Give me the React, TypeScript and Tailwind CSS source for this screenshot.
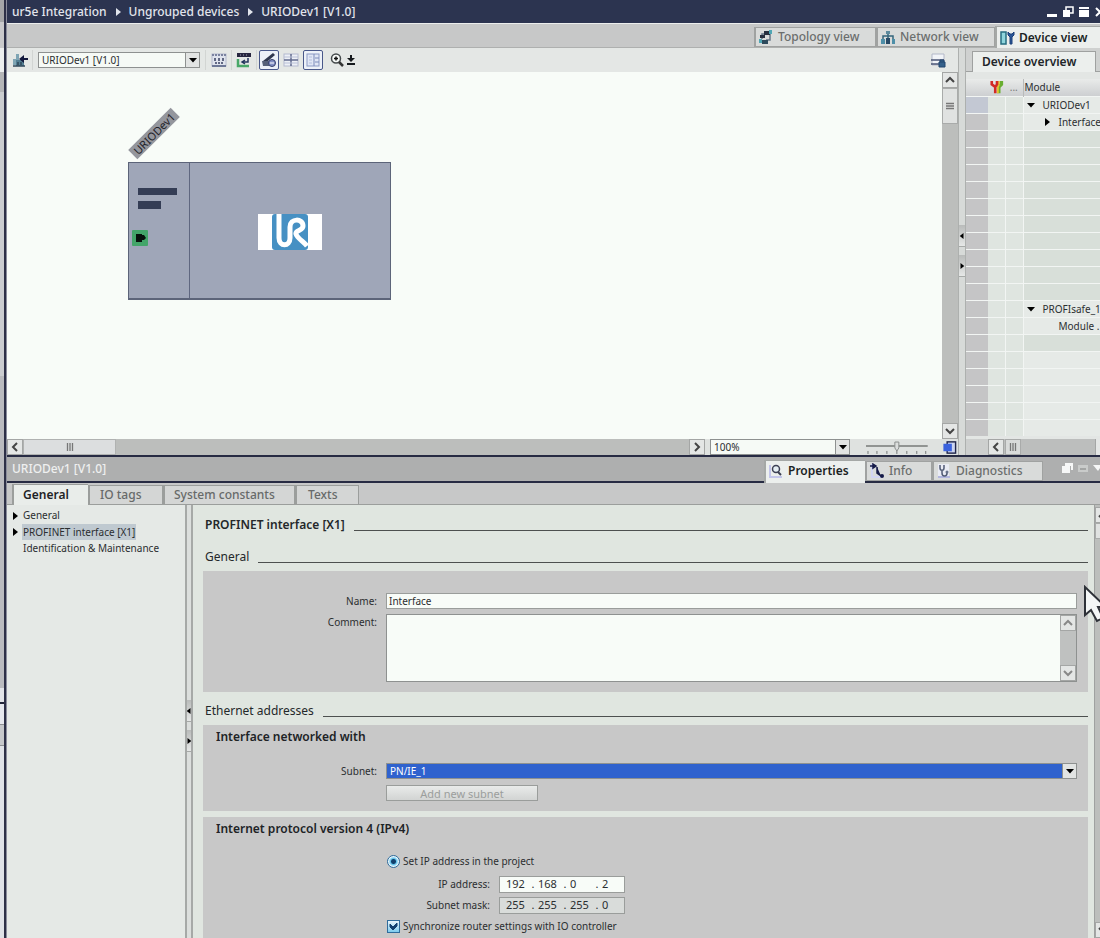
import type { ReactNode } from 'react';

type GlyphProps = { className?: string };

const Tri = ({ dir, className = '' }: { dir: 'r' | 'd' | 'l'; className?: string }) => (
  <svg viewBox="0 0 8 8" className={`h-2 w-2 shrink-0 ${className}`} aria-hidden="true">
    <path d={dir === 'r' ? 'M2 0l5 4-5 4z' : dir === 'l' ? 'M6 0L1 4l5 4z' : 'M0 2h8L4 6.500z'} fill="currentColor" />
  </svg>
);

const Chevron = ({ dir }: { dir: 'u' | 'd' | 'l' | 'r' }) => {
  const d = { u: 'M1 7l4-4 4 4', d: 'M1 3l4 4 4-4', l: 'M7 1L3 5l4 4', r: 'M3 1l4 4-4 4' }[dir];
  return (
    <svg viewBox="0 0 10 10" className="h-[10px] w-[10px]" aria-hidden="true">
      <path d={d} fill="none" stroke="currentColor" strokeWidth="2" />
    </svg>
  );
};

const ScrollButton = ({ dir, label, className = 'text-[#444]' }: { dir: 'u' | 'd' | 'l' | 'r'; label: string; className?: string }) => (
  <button
    type="button"
    aria-label={label}
    className={`flex h-4 w-4 shrink-0 items-center justify-center overflow-hidden border border-[#a4a6a5] bg-[#e4e6e5] ${className}`}
  >
    <Chevron dir={dir} />
  </button>
);

const Grip = ({ vertical = false }: { vertical?: boolean }) => (
  <svg viewBox="0 0 8 8" className="h-2 w-2" aria-hidden="true">
    <path d={vertical ? 'M0 1.500h8M0 4h8M0 6.500h8' : 'M1.500 0v8M4 0v8M6.500 0v8'} stroke="#777" strokeWidth="1.300" />
  </svg>
);

const TopologyIcon = ({ className = '' }: GlyphProps) => (
  <svg viewBox="0 0 16 16" className={`h-4 w-4 shrink-0 ${className}`} aria-hidden="true">
    <path d="M4 10V5h4M12 5v6H8" fill="none" stroke="#678" strokeWidth="1.500" />
    <rect x="6" y="2" width="6" height="4" fill="#27303f" />
    <rect x="11" y="1" width="3" height="4" fill="#4fa6b4" />
    <rect x="2" y="6" width="5" height="3" fill="#27303f" />
    <rect x="4" y="11" width="6" height="4" fill="#2d4a5c" />
    <rect x="1" y="10" width="3" height="4" fill="#4fa6b4" />
  </svg>
);

const NetworkIcon = ({ className = '' }: GlyphProps) => (
  <svg viewBox="0 0 16 16" className={`h-4 w-4 shrink-0 ${className}`} aria-hidden="true">
    <path d="M8 3v12M3 11V7h10v4" fill="none" stroke="#35667c" strokeWidth="1.500" />
    <rect x="6" y="2" width="4" height="3" fill="#5d8a9d" />
    <rect x="1" y="10" width="4" height="5" fill="#4e8fa8" />
    <rect x="6" y="9" width="4" height="6" fill="#284a66" />
    <rect x="12" y="10" width="3" height="5" fill="#4e8fa8" />
  </svg>
);

const DeviceIcon = ({ className = '' }: GlyphProps) => (
  <svg viewBox="0 0 16 16" className={`h-4 w-4 shrink-0 ${className}`} aria-hidden="true">
    <rect x="2" y="2" width="5" height="12" fill="#8fd5dc" stroke="#256c80" strokeWidth="1.500" />
    <path d="M9 2v3l2 2v7h2V7l2-2V2l-2 2h-2z" fill="#2a5597" stroke="#1d4079" />
  </svg>
);

const GoDeviceIcon = () => (
  <svg viewBox="0 0 16 16" className="h-4 w-4" aria-hidden="true">
    <path d="M4 2h3v6H4zM1 7h3v6H1z" fill="#7fa5b4" />
    <path d="M4 8h8v6H4z" fill="#537f93" />
    <path d="M1 14h12M6 10v3M9 10v3" stroke="#31485a" strokeWidth="1.500" />
    <path d="M16 7H10" stroke="#12183c" strokeWidth="2" />
    <path d="M12 3L7 7l5 4z" fill="#12183c" />
  </svg>
);

const CatalogIcon = () => (
  <svg viewBox="0 0 16 16" className="h-4 w-4" aria-hidden="true">
    <rect x="1" y="2" width="14" height="12" fill="#dfe3ed" stroke="#b3bacd" />
    <path d="M1 3h14" stroke="#7b83a0" strokeWidth="2" strokeDasharray="2 1" />
    <path d="M4 6v3M8 6v3M12 6v3M4 11h2M7 11h2M10 11h2" stroke="#384062" strokeWidth="1.500" />
    <path d="M1 14h14" stroke="#6d7797" strokeWidth="2" />
  </svg>
);

const RackIcon = () => (
  <svg viewBox="0 0 16 16" className="h-4 w-4" aria-hidden="true">
    <path d="M1 1h14v4H1z" fill="#27263f" />
    <path d="M4 3h1M7 3h1M10 3h1" stroke="#aab" />
    <path d="M12 6v4H7M9 8l-3 2 3 2" fill="none" stroke="#24365e" strokeWidth="1.500" />
    <path d="M2 7v7h11" fill="none" stroke="#49a869" strokeWidth="2.500" />
  </svg>
);

const PenIcon = () => (
  <svg viewBox="0 0 16 16" className="h-4 w-4" aria-hidden="true">
    <path d="M2 9L12 1l2 2-7 6z" fill="#30384f" />
    <path d="M1 9h7l2 5H2z" fill="#566078" />
    <circle cx="11" cy="11" r="3.500" fill="#8390c4" stroke="#37406b" />
    <path d="M9 11h4" stroke="#fff" />
  </svg>
);

const GridIcon = () => (
  <svg viewBox="0 0 16 16" className="h-4 w-4" aria-hidden="true">
    <rect x="1" y="2" width="14" height="12" fill="#edf0f6" stroke="#b3bad0" />
    <path d="M8 2v12M1 8h14" stroke="#626b8f" strokeWidth="1.500" />
    <path d="M1 5h14M1 11h14" stroke="#b9c0d6" />
  </svg>
);

const PanelIcon = () => (
  <svg viewBox="0 0 16 16" className="h-4 w-4" aria-hidden="true">
    <rect x="2" y="2" width="12" height="12" fill="#e0e6f5" stroke="#8c9ac4" />
    <path d="M9 2v12M10 6h4M10 10h4" stroke="#7c8cba" />
    <path d="M4 5h3M4 8h3M4 11h3" stroke="#b4bfdd" />
  </svg>
);

const ZoomIcon = () => (
  <svg viewBox="0 0 16 16" className="h-4 w-4" aria-hidden="true">
    <circle cx="7" cy="6.500" r="4.500" fill="#f5f8f6" stroke="#454a4c" strokeWidth="1.500" />
    <path d="M5 6.500h4M7 4.500v4" stroke="#111" strokeWidth="1.500" />
    <path d="M10 10l4 4" stroke="#333" strokeWidth="2.500" />
  </svg>
);

const UrLogo = () => (
  <svg viewBox="0 0 36 36" className="h-9 w-9" aria-hidden="true">
    <rect width="36" height="36" rx="3" fill="#4690c3" />
    <path
      d="M7 0v24c0 9 11 9 11 0V13c0-9 13-9 13-1 0 5-8 4-7 8 1 4 8 8 11 12"
      fill="none"
      stroke="#fff"
      strokeWidth="5"
      strokeLinejoin="round"
    />
  </svg>
);

const MagnifyIcon = () => (
  <svg viewBox="0 0 16 16" className="h-4 w-4 shrink-0" aria-hidden="true">
    <path d="M2 2v12h12" fill="none" stroke="#c3c5ea" strokeWidth="2" />
    <circle cx="8" cy="6" r="3.500" fill="#e4edf2" stroke="#3d4054" strokeWidth="1.500" />
    <path d="M10 9l3 3" stroke="#3d4054" strokeWidth="2" />
  </svg>
);

const InfoIcon = () => (
  <svg viewBox="0 0 16 16" className="h-4 w-4 shrink-0" aria-hidden="true">
    <path d="M3 1v13h10" fill="none" stroke="#d2d5f3" strokeWidth="2" />
    <path d="M1 3h4M4 1l3 2-3 2zM8 4v6l4 3" fill="#151a48" stroke="#151a48" strokeWidth="1.500" />
    <circle cx="13" cy="13" r="2" fill="#151a48" />
  </svg>
);

const DiagIcon = () => (
  <svg viewBox="0 0 16 16" className="h-4 w-4 shrink-0" aria-hidden="true">
    <rect x="2" y="1" width="11" height="12" fill="#e9ebf4" />
    <path d="M2 14h12" stroke="#b2b6df" strokeWidth="2" />
    <path d="M4 2v3c0 3 4 3 4 0V2M6 7v3c0 4 5 4 5 0" fill="none" stroke="#515b75" strokeWidth="1.500" />
    <circle cx="11" cy="9" r="1.500" fill="#68728b" />
  </svg>
);

const ToolsIcon = () => (
  <svg viewBox="0 0 16 16" className="mx-auto h-[14px] w-[14px]" aria-hidden="true">
    <path d="M13 1v4l-3 3v7" fill="none" stroke="#69ae31" strokeWidth="4" />
    <path d="M10 1v5l-1 2v7" fill="none" stroke="#e6c531" strokeWidth="2" />
    <path d="M2 1v4l4 3v7M8 1v4L6 8" fill="none" stroke="#d22b25" strokeWidth="3" />
  </svg>
);

const WindowButtons = () => (
  <div className="-mr-[6px] flex shrink-0 items-center gap-1 text-white">
    <button type="button" aria-label="Minimize">
      <svg viewBox="0 0 12 12" className="h-3 w-3"><path d="M1 8h10v3H1z" fill="currentColor" /></svg>
    </button>
    <button type="button" aria-label="Restore">
      <svg viewBox="0 0 12 12" className="h-3 w-3">
        <path d="M4 4V1h7v6H8" fill="none" stroke="currentColor" strokeWidth="1.500" />
        <path d="M1 4h7v7H1z" fill="currentColor" />
      </svg>
    </button>
    <button type="button" aria-label="Maximize">
      <svg viewBox="0 0 12 12" className="h-3 w-3">
        <path d="M1 1h10v2H1zM1 4h10v7H1z" fill="currentColor" />
      </svg>
    </button>
    <button type="button" aria-label="Close">
      <svg viewBox="0 0 12 12" className="h-3 w-3"><path d="M2 2l8 8M10 2l-8 8" stroke="currentColor" strokeWidth="2" /></svg>
    </button>
  </div>
);

const ViewTab = ({ icon, children, active = false, className = 'h-5' }: { icon: ReactNode; children: ReactNode; active?: boolean; className?: string }) => (
  <button
    type="button"
    role="tab"
    aria-selected={active}
    className={`flex shrink-0 items-center gap-1 border-l-2 border-t px-[2px] text-xs whitespace-nowrap ${
      active ? 'border-[#a5a8a6] bg-[#ecefed] font-semibold text-[#1b1f24]' : 'border-r border-b border-[#a0a2a1] bg-[#d9dbda] font-medium text-[#6b6e6d]'
    } ${className}`}
  >
    {icon}
    {children}
  </button>
);

const ToolButton = ({ label, pressed = false, children }: { label: string; pressed?: boolean; children: ReactNode }) => (
  <button
    type="button"
    aria-label={label}
    className={`flex h-5 w-5 shrink-0 items-center justify-center rounded-xs border ${pressed ? 'border-[#49588a] bg-[#edf1f8]' : 'border-transparent'}`}
  >
    {children}
  </button>
);

const Divider = () => <span className="mx-[2px] h-5 w-px bg-[#d2d5d3]" />;

const Combo = ({ id, label, options, className, selectClass }: { id: string; label?: string; options: string[]; className: string; selectClass: string }) => (
  <div className={`relative flex h-4 border border-[#8e9190] ${className}`}>
    <select id={id} aria-label={label} className={`h-full w-full appearance-none px-[3px] leading-[14px] outline-none ${selectClass}`}>
      {options.map((o) => (
        <option key={o}>{o}</option>
      ))}
    </select>
    <span className="pointer-events-none absolute inset-y-0 right-0 flex w-[14px] items-center justify-center border-l border-[#8e9190] bg-[#e2e4e3] text-black">
      <Tri dir="d" />
    </span>
  </div>
);

const SplitterHandle = ({ className = '' }: { className?: string }) => (
  <div className={`flex flex-col gap-2 ${className}`}>
    {(['l', 'r'] as const).map((dir) => (
      <button
        key={dir}
        type="button"
        aria-label={dir === 'l' ? 'Collapse left' : 'Collapse right'}
        className="flex h-[22px] w-full items-center justify-center overflow-hidden border-b border-[#a7aaa8] bg-linear-to-b from-[#b9bbba] to-[#e6e8e7] text-black"
      >
        <Tri dir={dir} className="h-[6px] w-[6px]" />
      </button>
    ))}
  </div>
);

const moduleRows = Array.from({ length: 20 }, (_, i) => i);
const moduleNames: Record<number, { text: string; dir?: 'r' | 'd'; pad: string }> = {
  0: { text: 'URIODev1', dir: 'd', pad: 'pl-[3px] gap-2' },
  1: { text: 'Interface', dir: 'r', pad: 'pl-[19px] gap-2' },
  12: { text: 'PROFIsafe_1', dir: 'd', pad: 'pl-[3px] gap-2' },
  13: { text: 'Module .', pad: 'pl-[35px]' },
};

const DeviceOverview = () => (
  <aside className="flex w-[134px] shrink-0 flex-col overflow-hidden bg-[#e3e6e4]">
    <div className="flex h-6 shrink-0 items-end border-b border-[#9fa1a0] bg-[#cfd1d0] pl-[6px]">
      <button type="button" className="-mb-px h-[21px] w-[124px] border border-b-0 border-[#9fa1a0] bg-[#ecefed] px-[9px] text-left text-xs font-semibold whitespace-nowrap text-[#22262a]">
        Device overview
      </button>
    </div>
    <table className="mt-[7px] w-[240px] table-fixed border-collapse text-[10px] leading-3 text-[#2c2f31]">
      <colgroup>
        <col className="w-[22px]" />
        <col className="w-[17px]" />
        <col className="w-[18px]" />
        <col />
      </colgroup>
      <thead>
        <tr className="h-[17px] bg-linear-to-b from-[#e9ebea] to-[#cdcfd1]">
          <th className="p-0" />
          <th className="p-0"><ToolsIcon /></th>
          <th className="p-0 font-normal text-[#777]">...</th>
          <th className="border-l border-[#b9bbba] p-0 pl-px text-left font-normal">Module</th>
        </tr>
      </thead>
      <tbody>
        {moduleRows.map((i) => {
          const item = moduleNames[i];
          const light = item || i > 14;
          return (
            <tr key={i} className="h-[17px] border-t border-[#f2f5f3]">
              <td className={`p-0 ${i === 0 ? 'bg-[#c3c8d3]' : 'bg-[#c5c5c6]'}`} />
              <td className="border-r border-[#f2f5f3] bg-[#dfe5e0] p-0" />
              <td className="border-r border-[#f2f5f3] bg-[#dfe5e0] p-0" />
              <td className={`p-0 ${light ? 'bg-[#e6eae7]' : 'bg-[#d8dfd9]'}`}>
                {item && (
                  <div className={`flex items-center ${item.pad}`}>
                    {item.dir && <Tri dir={item.dir} className="text-black" />}
                    {item.text}
                  </div>
                )}
              </td>
            </tr>
          );
        })}
      </tbody>
    </table>
    <div className="mt-auto flex h-4 shrink-0 bg-[#bcbebd]">
      <div className="w-[22px] bg-[#cdcfce]" />
      <ScrollButton dir="l" label="Scroll left" />
      <div className="ml-px flex w-4 items-center justify-center border border-[#a9abaa] bg-[#d9dbda]"><Grip /></div>
      <div className="flex-1" />
      <div className="w-[5px] border-l border-[#a4a6a5] bg-[#e4e6e5]" />
    </div>
  </aside>
);

const DeviceCanvas = () => (
  <div className="relative min-w-0 flex-1 overflow-hidden bg-[#f8fcf8]">
    <div className="absolute top-[55px] left-[117px] flex h-[13px] w-[60px] -rotate-45 items-center justify-center bg-[#94969d] text-[11px] leading-none text-[#1f2229]">
      URIODev1
    </div>
    <div className="absolute top-[90px] left-[121px] flex h-[138px] w-[263px] border border-b-2 border-[#5c6479] bg-[#9fa6b8]">
      <div className="flex w-[61px] flex-col items-start border-r border-[#5f6780]">
        <div className="mt-[25px] ml-[9px] h-[7px] w-[39px] bg-[#343d55]" />
        <div className="mt-[6px] ml-[9px] h-2 w-[23px] bg-[#343d55]" />
        <svg viewBox="0 0 16 16" className="mt-[21px] ml-[3px] h-4 w-4" aria-hidden="true">
          <rect width="16" height="16" rx="1" fill="#43a569" />
          <path d="M4 4h6v1h2l2 3-2 2h-2v2H4z" fill="#06110b" />
        </svg>
      </div>
      <div className="flex flex-1 items-center justify-center pt-[2px]">
        <div className="flex w-16 justify-center bg-white">
          <UrLogo />
        </div>
      </div>
    </div>
  </div>
);

const Heading = ({ children, bold = false, className = '' }: { children: ReactNode; bold?: boolean; className?: string }) => (
  <div className={`flex h-5 items-center gap-[9px] pl-[2px] text-[#24282a] ${className}`}>
    <h2 className={`text-xs whitespace-nowrap ${bold ? 'font-semibold' : ''}`}>{children}</h2>
    <div className="mt-[10px] h-px flex-1 bg-[#4d504f]" />
  </div>
);

const Row = ({ label, htmlFor, children, className = '' }: { label?: string; htmlFor?: string; children: ReactNode; className?: string }) => (
  <div className={`flex items-start gap-[9px] pr-[11px] ${className}`}>
    <label htmlFor={htmlFor} className="w-[174px] shrink-0 text-right leading-4">{label}</label>
    {children}
  </div>
);

const Octets = ({ name, values, disabled = false, id }: { name: string; values: number[]; disabled?: boolean; id: string }) => (
  <div role="group" aria-label={name} className={`flex h-[17px] w-[126px] items-center border border-[#9a9d9b] pl-[6px] text-[11px] ${disabled ? 'bg-[#d9dcda]' : 'bg-[#f8fcf8]'}`}>
    {values.map((v, i) => (
      <div key={i} className="flex items-center">
        {i > 0 && <span className="w-[10px] text-center">.</span>}
        <input id={i === 0 ? id : undefined} aria-label={`${name} octet ${i + 1}`} defaultValue={v} readOnly={disabled} className="h-[14px] w-[22px] bg-transparent p-0 outline-none" />
      </div>
    ))}
  </div>
);

const PropertyTab = ({ children, active = false, className = '' }: { children: ReactNode; active?: boolean; className?: string }) => (
  <button
    type="button"
    role="tab"
    aria-selected={active}
    className={`border-t border-l-2 border-[#9b9e9c] text-left text-xs whitespace-nowrap ${
      active ? '-mb-px h-[21px] bg-[#e9edea] pb-px font-semibold text-[#1f2326]' : 'h-[19px] border-r bg-[#d4d6d5] font-medium text-[#676a69]'
    } ${className}`}
  >
    {children}
  </button>
);

export default function App() {
  return (
    <div className="relative flex h-screen overflow-hidden bg-[#e5e9e6] font-['Noto_Sans','Open_Sans',sans-serif] text-[10px] text-[#2b2e30]">
      <div className="flex w-1 shrink-0 flex-col">
        <div className="h-[22px] bg-[#a5a6a8]" />
        <div className="h-[26px] bg-[#c9c9cb]" />
        <div className="h-6 bg-[#eceeee]" />
        <div className="h-[20px] bg-[#b5b6b8]" />
        <div className="h-[284px] bg-[#cbcdd0]" />
        <div className="h-[312px] bg-[#babbbf]" />
        <div className="h-[14px] bg-[#e2e4e8]" />
        <div className="h-[2px] bg-[#22263a]" />
        <div className="h-5 bg-[#e6e8ee]" />
        <div className="h-[22px] border-y border-[#8e9094] bg-[#c6c8cb]" />
        <div className="flex-1 bg-[#dfe2e7]" />
      </div>
      <div className="w-[3px] shrink-0 border-r border-r-[#8a8c9c] bg-[#2d3047]" />

      <div className="flex min-w-0 flex-1 flex-col">
        <header className="flex h-[23px] shrink-0 items-center justify-between bg-[#2c3450] pl-[5px] text-white">
          <nav aria-label="Path" className="flex items-center gap-[7px] text-xs font-medium whitespace-nowrap text-[#e2e5ec]">
            <a href="#project">ur5e Integration</a>
            <Tri dir="r" />
            <a href="#devices">Ungrouped devices</a>
            <Tri dir="r" />
            <a href="#device">URIODev1 [V1.0]</a>
          </nav>
          <WindowButtons />
        </header>

        <div role="tablist" className="flex h-[25px] shrink-0 items-end justify-end border-t border-b border-t-[#eceeed] border-b-[#aeb0af] bg-[#c7c8c8]">
          <ViewTab icon={<TopologyIcon />} className="h-5 w-[122px]">Topology view</ViewTab>
          <ViewTab icon={<NetworkIcon />} className="h-5 w-[119px]">Network view</ViewTab>
          <ViewTab icon={<DeviceIcon />} active className="-mb-px h-[22px] w-[105px]">Device view</ViewTab>
        </div>

        <section className="flex h-[407px] shrink-0">
          <div className="flex min-w-0 flex-1 flex-col">
            <div className="flex h-6 shrink-0 items-center bg-[#e4e7e5] pr-3 pl-[3px]">
              <ToolButton label="Go to device"><GoDeviceIcon /></ToolButton>
              <Divider />
              <Combo id="device" label="Device" options={['URIODev1 [V1.0]']} className="ml-[3px] w-[162px]" selectClass="bg-[#f6faf6]" />
              <div className="ml-[3px] flex items-center">
                <Divider />
                <span className="w-px" />
                <ToolButton label="Catalog data"><CatalogIcon /></ToolButton>
                <Divider />
                <ToolButton label="Slot labels"><RackIcon /></ToolButton>
                <Divider />
              </div>
              <div className="flex items-center gap-[2px]">
                <ToolButton label="Edit" pressed><PenIcon /></ToolButton>
                <ToolButton label="Page breaks"><GridIcon /></ToolButton>
                <ToolButton label="Overview pane" pressed><PanelIcon /></ToolButton>
              </div>
              <button type="button" aria-label="Zoom in" className="ml-[6px]"><ZoomIcon /></button>
              <svg viewBox="0 0 8 12" className="ml-[2px] h-3 w-2" aria-hidden="true">
                <path d="M3 1h2v3h3L4 8 0 4h3zM0 9h8v2H0z" fill="#161a1d" />
              </svg>
              <button type="button" aria-label="Save layout" className="ml-auto">
                <svg viewBox="0 0 16 16" className="h-4 w-4" aria-hidden="true">
                  <path d="M2 2h12v11H2z" fill="#f1f4f8" stroke="#b3b8c8" />
                  <path d="M1 8h13M1 12h8" stroke="#4b5575" strokeWidth="1.500" />
                  <path d="M9 10h6v5H9zM10 10V8h4v2" fill="#34608a" stroke="#23476e" />
                </svg>
              </button>
            </div>
            <div className="flex min-h-0 flex-1">
              <DeviceCanvas />
              <div className="flex w-4 flex-col bg-[#bcbebc]">
                <ScrollButton dir="u" label="Scroll up" />
                <div className="flex h-9 items-center justify-center border border-[#a9abaa] bg-[#e0e2e1]"><Grip vertical /></div>
                <div className="flex-1" />
                <ScrollButton dir="d" label="Scroll down" />
              </div>
            </div>
            <div className="flex h-4 shrink-0 items-stretch bg-[#bcbebc]">
              <ScrollButton dir="l" label="Scroll left" />
              <div className="flex w-[93px] items-center justify-center border border-[#b0b2b1] bg-[#dcdedf]"><Grip /></div>
              <div className="flex-1" />
              <ScrollButton dir="r" label="Scroll right" />
              <div className="flex w-[253px] items-center bg-[#dfe2e0] pl-[5px]">
                <Combo id="zoom" label="Zoom" options={['100%']} className="w-[141px]" selectClass="bg-[#f6faf6]" />
                <svg viewBox="0 0 62 14" className="ml-4 h-[14px] w-[62px]" aria-hidden="true">
                  <path d="M0 6h62" stroke="#777a79" strokeWidth="1.500" />
                  <path d="M2 11v3M11 11v3M21 11v3M31 10v4M41 11v3M51 11v3M60 11v3" stroke="#777a79" />
                  <path d="M29 2h4v6l-2 3-2-3z" fill="#dcdedd" stroke="#8b8e8d" />
                </svg>
                <svg viewBox="0 0 16 16" className="ml-[14px] h-[15px] w-4" aria-hidden="true">
                  <rect x="5" y="2" width="9" height="12" fill="#cdd5f0" stroke="#20264b" strokeWidth="1.500" />
                  <path d="M1 4h9v8H1z" fill="#3a62dd" />
                </svg>
              </div>
            </div>
          </div>
          <div className="flex w-2 shrink-0 flex-col border-x border-[#adb0ae] bg-[#d7dad8] pt-[177px]">
            <SplitterHandle />
          </div>
          <DeviceOverview />
        </section>

        <div className="flex h-7 shrink-0 items-end justify-between border-t-2 border-b-2 border-[#272b43] bg-[#aeafaf] pl-[5px]">
          <h1 className="self-center text-xs font-medium text-[#eff0f0]">URIODev1 [V1.0]</h1>
          <div className="flex">
            <div role="tablist" className="flex items-end">
              <ViewTab icon={<MagnifyIcon />} active className="-mb-[2px] h-[23px] w-[101px] pb-[2px]">Properties</ViewTab>
              <ViewTab icon={<InfoIcon />} className="h-5 w-[67px]">Info</ViewTab>
              <ViewTab icon={<DiagIcon />} className="h-5 w-[111px]">Diagnostics</ViewTab>
            </div>
            <svg viewBox="0 0 40 14" className="mt-[2px] -mr-[2px] ml-[19px] h-[14px] w-10" aria-hidden="true">
              <path d="M3 1h8v7H9V4H3zM0 4h8v7H0z" fill="#f6f7f7" />
              <path d="M16 3h10v7H16z" fill="#c9cbca" />
              <path d="M18 6h6v2h-6z" fill="#a3a5a4" />
              <path d="M31 3h9l-4 6z" fill="#f6f7f7" />
            </svg>
          </div>
        </div>

        <div role="tablist" className="flex h-[22px] shrink-0 items-end border-b border-[#9b9e9c] bg-[#c7c8c8] pl-[5px]">
          <PropertyTab active className="w-[76px] pl-[9px]">General</PropertyTab>
          <PropertyTab className="w-[75px] pl-[10px]">IO tags</PropertyTab>
          <PropertyTab className="w-[132px] pl-[9px]">System constants</PropertyTab>
          <PropertyTab className="w-[64px] pl-[11px]">Texts</PropertyTab>
        </div>

        <section className="flex min-h-0 flex-1">
          <ul className="w-[178px] shrink-0 pt-[2px] pl-1 leading-[17px] whitespace-nowrap">
            <li className="flex items-center gap-[3px]">
              <Tri dir="r" className="text-black" />
              <a href="#general" className="px-[1px]">General</a>
            </li>
            <li className="flex items-center gap-[3px]">
              <Tri dir="r" className="text-black" />
              <a href="#profinet" className="bg-[#bfc9d0] px-[1px] leading-4">PROFINET interface [X1]</a>
            </li>
            <li className="pl-3"><a href="#im">Identification &amp; Maintenance</a></li>
          </ul>
          <div className="w-2 shrink-0 border-x-2 border-[#a6a9a7] bg-[#dcdfdd] pt-[195px]">
            <SplitterHandle />
          </div>

          <main className="min-w-0 flex-1 overflow-hidden bg-[#e0e6e0] pr-[6px] pl-[10px]">
            <Heading bold className="mt-[10px]">PROFINET interface [X1]</Heading>
            <Heading className="mt-3">General</Heading>
            <div className="mt-1 h-[121px] bg-[#c8c8c8] pt-[22px]">
              <Row label="Name:" htmlFor="name">
                <input id="name" defaultValue="Interface" className="h-4 min-w-0 flex-1 border border-[#9a9d9b] bg-[#f8fcf8] px-[2px] outline-none" />
              </Row>
              <Row label="Comment:" htmlFor="comment" className="mt-[5px]">
                <div className="flex h-[68px] min-w-0 flex-1 border border-[#8e9190] bg-[#f8fcf8]">
                  <textarea id="comment" className="min-w-0 flex-1 resize-none outline-none" />
                  <div className="flex w-4 flex-col justify-between bg-[#bfc1c0]">
                    <ScrollButton dir="u" label="Scroll comment up" className="text-[#888]" />
                    <ScrollButton dir="d" label="Scroll comment down" className="text-[#888]" />
                  </div>
                </div>
              </Row>
            </div>
            <Heading className="mt-[9px]">Ethernet addresses</Heading>
            <div className="mt-1 h-[86px] bg-[#c8c8c8] pt-1">
              <h3 className="pl-[13px] text-xs leading-4 font-semibold text-[#202326]">Interface networked with</h3>
              <Row label="Subnet:" htmlFor="subnet" className="mt-[18px]">
                <Combo id="subnet" options={['PN/IE_1']} className="flex-1" selectClass="bg-[#2f62ce] text-white" />
              </Row>
              <Row className="mt-[6px]">
                <button type="button" disabled className="h-4 w-[152px] border border-[#9a9d9b] bg-linear-to-b from-[#e9ebea] to-[#d2d4d3] text-[11px] leading-[13px] text-[#9b9e9c]">
                  Add new subnet
                </button>
              </Row>
            </div>
            <div className="mt-[6px] h-[200px] bg-[#c8c8c8] pt-1">
              <h3 className="pl-[13px] text-xs leading-4 font-semibold text-[#202326]">Internet protocol version 4 (IPv4)</h3>
              <div className="mt-4 ml-[184px] flex h-4 items-center gap-[3px]">
                <input id="setip" type="radio" name="ipmode" defaultChecked className="h-[13px] w-[13px] appearance-none rounded-full border border-[#2b6797] bg-white checked:bg-[radial-gradient(circle,#12406c_0_2px,#5fc1ea_3px,#e6f6fd_5px)]" />
                <label htmlFor="setip">Set IP address in the project</label>
              </div>
              <div className="mt-[7px] flex flex-col gap-1">
                <div className="flex items-center gap-[9px]">
                  <label htmlFor="ip" className="w-[287px] text-right">IP address:</label>
                  <Octets id="ip" name="IP address" values={[192, 168, 0, 2]} />
                </div>
                <div className="flex items-center gap-[9px]">
                  <label htmlFor="mask" className="w-[287px] text-right">Subnet mask:</label>
                  <Octets id="mask" name="Subnet mask" values={[255, 255, 255, 0]} disabled />
                </div>
              </div>
              <div className="mt-1 ml-[184px] flex h-4 items-center gap-[3px]">
                <span className="relative flex h-[13px] w-[13px]">
                  <input id="sync" type="checkbox" defaultChecked className="peer h-[13px] w-[13px] appearance-none border border-[#2f6c9c] bg-linear-to-b from-[#e8f4fa] to-[#7ccbee]" />
                  <svg viewBox="0 0 13 13" className="pointer-events-none absolute inset-0 hidden h-[13px] w-[13px] peer-checked:block" aria-hidden="true">
                    <path d="M3 4v3l3 3 4-4V3L6 7z" fill="#123f6e" stroke="#123f6e" />
                  </svg>
                </span>
                <label htmlFor="sync">Synchronize router settings with IO controller</label>
              </div>
            </div>
          </main>
          <div className="flex w-[6px] shrink-0 flex-col items-start overflow-hidden border-l border-[#9fa1a0] bg-[#bcbebc] pt-[2px]">
            <ScrollButton dir="u" label="Scroll properties up" />
            <div className="h-4 w-4 border border-[#a9abaa] bg-[#e0e2e1]" />
            <div className="flex-1" />
            <ScrollButton dir="d" label="Scroll properties down" />
          </div>
        </section>
      </div>

      <svg viewBox="0 0 24 38" className="pointer-events-none absolute top-[585px] -right-[7px] h-[38px] w-6" aria-hidden="true">
        <path d="M2 2v28l6-5 6 11 6-3-5-11h8z" fill="#f4f6f6" stroke="#2e3138" strokeWidth="2" />
      </svg>
    </div>
  );
}
